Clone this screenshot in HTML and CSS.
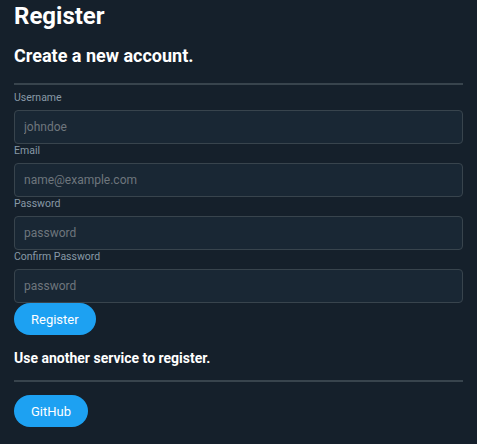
FILE: index.html
```html
<!DOCTYPE html>
<html>
<head>
<meta charset="utf-8">
<link rel="stylesheet" href="styles.css">
</head>
<body>
<main class="page">
  <h1 class="title">Register</h1>
  <h2 class="subtitle">Create a new account.</h2>
  <hr class="rule">
  <form class="form">
    <label class="label" for="u">Username</label>
    <input class="input" id="u" placeholder="johndoe">
    <label class="label" for="e">Email</label>
    <input class="input" id="e" placeholder="name@example.com">
    <label class="label" for="p">Password</label>
    <input class="input" id="p" type="password" placeholder="password">
    <label class="label" for="c">Confirm Password</label>
    <input class="input" id="c" type="password" placeholder="password">
    <div><button class="btn" type="button">Register</button></div>
  </form>
  <h3 class="section">Use another service to register.</h3>
  <hr class="rule rule-small">
  <div><button class="btn" type="button">GitHub</button></div>
</main>
</body>
</html>
```
FILE: styles.css
```css
html, body {
  margin: 0;
  padding: 0;
  background: #15202b;
}
body {
  font-family: Roboto, "Liberation Sans", sans-serif;
  color: #ffffff;
}
.page {
  padding: 0 14px 14px;
}
.title {
  font-size: 24px;
  font-weight: 700;
  margin: 0;
  line-height: 32px;
}
.subtitle {
  font-size: 18px;
  font-weight: 700;
  margin: 12px 0 0;
  line-height: 24px;
}
.rule {
  border: 0;
  height: 2px;
  background: #38444d;
  margin: 15px 0 6px;
}
.form {
  display: flex;
  flex-direction: column;
}
.label {
  font-size: 10.5px;
  color: #8899a6;
  line-height: 13px;
  height: 19px;
}
.input {
  box-sizing: border-box;
  height: 34px;
  background: #192734;
  border: 1px solid #38444d;
  border-radius: 4px;
  color: #fff;
  font-family: Roboto, "Liberation Sans", sans-serif;
  font-size: 12px;
  padding: 0 9px;
  outline: none;
}
.input::placeholder {
  color: #6e767d;
}
.btn {
  font-family: Roboto, "Liberation Sans", sans-serif;
  background: #1da1f2;
  color: #fff;
  border: 0;
  border-radius: 999px;
  height: 32px;
  padding: 0 17px;
  font-size: 13px;
  cursor: pointer;
}
.section {
  font-size: 14px;
  font-weight: 700;
  margin: 13px 0 0;
  line-height: 20px;
}
.rule-small {
  margin: 12px 0 13px;
}
```
